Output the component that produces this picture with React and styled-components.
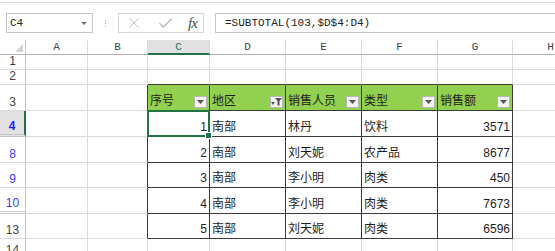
import React from "react";
import styled, { createGlobalStyle } from "styled-components";
import { X, Check } from "lucide-react";

const GlobalStyle = createGlobalStyle`
  body {
    margin: 0;
    background: #fff;
    font-family: "Liberation Sans", "Noto Sans CJK SC", sans-serif;
  }
`;

const GREEN = "#217346";
const GRID = "#dadada";
const DARK = "#3a3a3a";

const Page = styled.div`
  width: 555px;
  height: 251px;
  overflow: hidden;
  background: #fff;
`;

const Ribbon = styled.div`
  height: 2px;
  border-bottom: 1px solid #d8d8d8;
`;

const FormulaBar = styled.div`
  display: flex;
  align-items: stretch;
  height: 20px;
  margin-top: 10px;
  font-family: "Liberation Mono", monospace;
  font-size: 11px;
  color: #222;
`;

const NameBox = styled.div`
  width: 87px;
  margin-left: 6px;
  box-sizing: border-box;
  border: 1px solid #c6c6c6;
  display: flex;
  align-items: center;
  justify-content: space-between;
  padding: 0 5px 0 3px;
`;

const Caret = styled.span`
  width: 0;
  height: 0;
  border-left: 3px solid transparent;
  border-right: 3px solid transparent;
  border-top: 3px solid #777;
`;

const Grip = styled.div`
  width: 25px;
  display: flex;
  flex-direction: column;
  align-items: center;
  justify-content: center;
  gap: 2px;

  span {
    width: 1px;
    height: 1px;
    background: #a0a0a0;
  }
`;

const FnBox = styled.div`
  width: 86px;
  box-sizing: border-box;
  border: 1px solid #d4d4d4;
  display: flex;
  align-items: center;
  padding: 0 4px 0 6px;
  gap: 14px;
  color: #bdbdbd;
`;

const Fx = styled.span`
  font-family: "Liberation Serif", serif;
  font-style: italic;
  font-size: 15px;
  color: #4a4a4a;
  letter-spacing: -1px;
`;

const FormulaInput = styled.div`
  flex: 1;
  margin-left: 11px;
  box-sizing: border-box;
  border: 1px solid #c6c6c6;
  border-right: none;
  display: flex;
  align-items: center;
  padding-left: 9px;
  white-space: nowrap;
`;

const Sheet = styled.div`
  display: grid;
  margin-top: 7px;
  grid-template-columns: 26px 62px 60px 62px 76px 76px 76px 75px 76px;
  grid-template-rows: 15px 15px 15px 26px 26px 26px 25px 26px 25px 20px;
`;

const Corner = styled.div`
  box-sizing: border-box;
  border-right: 1px solid #c6c6c6;
  border-bottom: 1px solid #b0b0b0;
  display: flex;
  align-items: flex-end;
  justify-content: flex-end;
  padding: 0 2px 2px 0;
`;

const ColHead = styled.div`
  box-sizing: border-box;
  border-right: 1px solid ${GRID};
  border-bottom: ${(p) => (p.$active ? `2px solid ${GREEN}` : "1px solid #b0b0b0")};
  background: ${(p) => (p.$active ? "#e1e1e1" : "#fff")};
  color: ${(p) => (p.$active ? GREEN : "#444")};
  font-family: "Liberation Mono", monospace;
  font-size: 11px;
  display: flex;
  align-items: center;
  justify-content: center;
`;

const RowHead = styled.div`
  box-sizing: border-box;
  border-right: ${(p) => (p.$active ? `2px solid ${GREEN}` : "1px solid #c6c6c6")};
  border-bottom: ${(p) => (p.$gap ? "3px double #c6c6c6" : `1px solid ${GRID}`)};
  background: ${(p) => (p.$active ? "#e1e1e1" : "#fff")};
  color: ${(p) => (p.$active ? "#1a1aff" : p.$filtered ? "#3b3bff" : "#444")};
  font-weight: ${(p) => (p.$active ? 700 : 400)};
  font-size: 12px;
  display: flex;
  align-items: flex-end;
  justify-content: center;
  padding-bottom: 1px;
  line-height: 13px;
`;

const Cell = styled.div`
  position: relative;
  box-sizing: border-box;
  border-right: 1px solid ${(p) => (p.$edgeR ? DARK : GRID)};
  border-bottom: 1px solid ${(p) => (p.$edgeB ? DARK : GRID)};
  background: ${(p) => (p.$head ? "#92d050" : "#fff")};
  display: flex;
  align-items: flex-end;
  justify-content: ${(p) => (p.$num ? "flex-end" : "space-between")};
  padding: 0 2px 1px 2px;
  font-size: 12px;
  line-height: 15px;
  color: #1e1e1e;
  white-space: nowrap;
`;

const FilterButton = styled.span`
  width: 13px;
  height: 12px;
  box-sizing: border-box;
  margin-bottom: 1px;
  border: 1px solid #b8b8b8;
  background: #f4f4f4;
  display: flex;
  align-items: center;
  justify-content: center;
`;

const Selection = styled.div`
  position: absolute;
  top: -1px;
  left: -1px;
  right: -1px;
  bottom: -1px;
  border: 2px solid ${GREEN};
  z-index: 2;
  pointer-events: none;
`;

const FillHandle = styled.span`
  position: absolute;
  right: -4px;
  bottom: -4px;
  width: 5px;
  height: 5px;
  background: ${GREEN};
  border: 1px solid #fff;
`;

const letters = ["A", "B", "C", "D", "E", "F", "G", "H"];

const rows = [
  { label: "1", h: "" },
  { label: "2" },
  { label: "3" },
  { label: "4", active: true, filtered: true, gap: true },
  { label: "8", filtered: true },
  { label: "9", filtered: true },
  { label: "10", filtered: true, gap: true },
  { label: "13" },
  { label: "14" },
];

const headers = [
  { text: "序号" },
  { text: "地区", filtered: true },
  { text: "销售人员" },
  { text: "类型" },
  { text: "销售额" },
];

const data = [
  [1, "南部", "林丹", "饮料", 3571],
  [2, "南部", "刘天妮", "农产品", 8677],
  [3, "南部", "李小明", "肉类", 450],
  [4, "南部", "李小明", "肉类", 7673],
  [5, "南部", "刘天妮", "肉类", 6596],
];

// table covers sheet rows 2..7 and columns 2..6 (C..G)
const inTable = (r, c) => r >= 2 && r <= 7 && c >= 2 && c <= 6;

const DropArrow = () => (
  <svg width="7" height="4" viewBox="0 0 7 4">
    <polygon points="0,0 7,0 3.5,4" fill="#555" />
  </svg>
);

const FilterIcon = () => (
  <svg width="11" height="8" viewBox="0 0 11 8">
    <polygon points="0,4 4,4 2,7" fill="#555" />
    <polygon points="4,0 11,0 8.5,3 8.5,8 6.5,7 6.5,3" fill="#555" />
  </svg>
);

const cellContent = (r, c) => {
  if (r === 2 && inTable(r, c)) {
    const h = headers[c - 2];
    return (
      <>
        <span>{h.text}</span>
        <FilterButton>{h.filtered ? <FilterIcon /> : <DropArrow />}</FilterButton>
      </>
    );
  }
  if (r >= 3 && inTable(r, c)) {
    const v = data[r - 3][c - 2];
    return <span>{v}</span>;
  }
  return null;
};

const App = () => {
  return (
    <Page>
      <GlobalStyle />
      <Ribbon />

      <FormulaBar>
        <NameBox>
          <span>C4</span>
          <Caret />
        </NameBox>
        <Grip>
          <span />
          <span />
          <span />
        </Grip>
        <FnBox>
          <X size={18} strokeWidth={1.2} />
          <Check size={17} strokeWidth={2.2} />
          <Fx>fx</Fx>
        </FnBox>
        <FormulaInput>=SUBTOTAL(103,$D$4:D4)</FormulaInput>
      </FormulaBar>

      <Sheet>
        <Corner>
          <svg width="8" height="8" viewBox="0 0 8 8">
            <polygon points="8,0 8,8 0,8" fill="#d2d2d2" />
          </svg>
        </Corner>
        {letters.map((l, i) => (
          <ColHead key={l} $active={i === 2}>
            {l}
          </ColHead>
        ))}

        {rows.map((row, r) => (
          <React.Fragment key={row.label}>
            <RowHead $active={row.active} $filtered={row.filtered} $gap={row.gap}>
              {row.label}
            </RowHead>
            {letters.map((l, c) => {
              const isNum = r >= 3 && (c === 2 || c === 6);
              return (
                <Cell
                  key={l}
                  $edgeR={inTable(r, c) || inTable(r, c + 1)}
                  $edgeB={inTable(r, c) || inTable(r + 1, c)}
                  $head={r === 2 && inTable(r, c)}
                  $num={isNum}
                >
                  {cellContent(r, c)}
                  {r === 3 && c === 2 && (
                    <Selection>
                      <FillHandle />
                    </Selection>
                  )}
                </Cell>
              );
            })}
          </React.Fragment>
        ))}
      </Sheet>
    </Page>
  );
};

export default App;
